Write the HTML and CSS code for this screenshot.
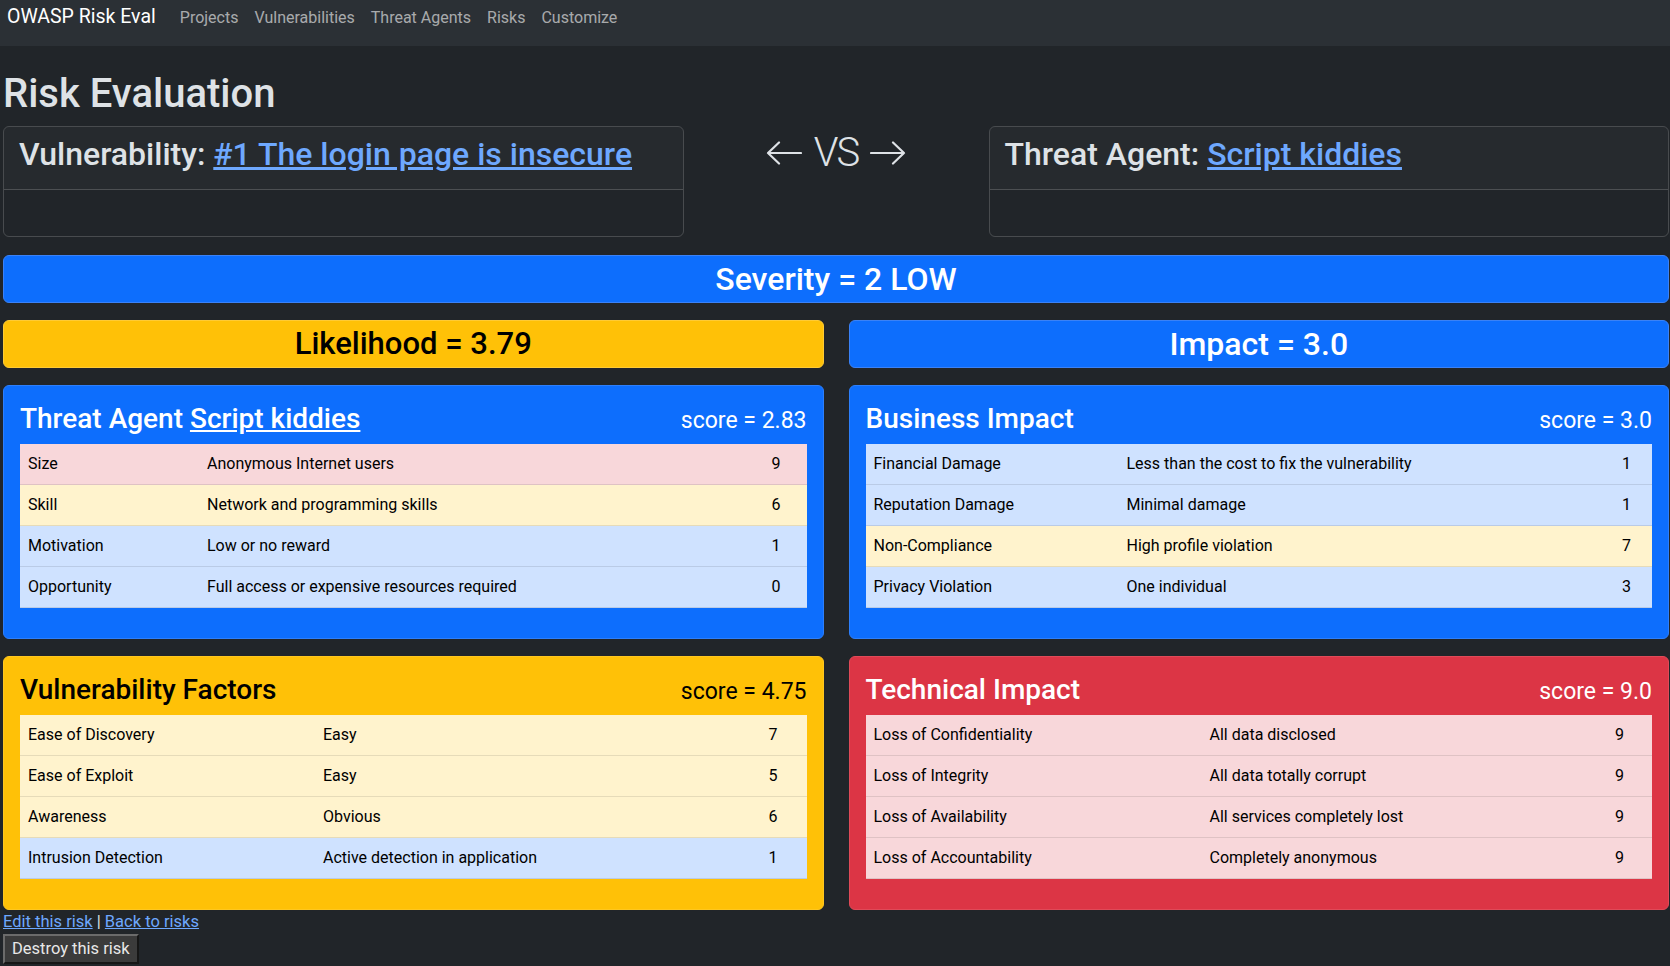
FILE: index.html
```html
<!DOCTYPE html>
<html lang="en">
<head>
<meta charset="utf-8">
<title>OWASP Risk Eval</title>
<link rel="stylesheet" href="styles.css">
</head>
<body>
<nav class="navbar">
  <a class="brand" href="#">OWASP Risk Eval</a>
  <ul class="nav-links">
    <li><a class="nav-link" href="#">Projects</a></li>
    <li><a class="nav-link" href="#">Vulnerabilities</a></li>
    <li><a class="nav-link" href="#">Threat Agents</a></li>
    <li><a class="nav-link" href="#">Risks</a></li>
    <li><a class="nav-link" href="#">Customize</a></li>
  </ul>
</nav>

<main class="page">
  <h1 class="page-title">Risk Evaluation</h1>

  <div class="versus">
    <div class="entity-card">
      <div class="entity-header">
        <h2 class="entity-title">Vulnerability: <a href="#">#1 The login page is insecure</a></h2>
      </div>
      <div class="entity-body"></div>
    </div>

    <div class="vs">
      <svg class="arrow" width="36" height="24" viewBox="0 0 36 24" aria-hidden="true">
        <path d="M35 12H2M13 1.5L2 12l11 10.5" fill="none" stroke="currentColor" stroke-width="2.2" stroke-linecap="round" stroke-linejoin="round"/>
      </svg>
      <span class="vs-text">VS</span>
      <svg class="arrow" width="36" height="24" viewBox="0 0 36 24" aria-hidden="true">
        <path d="M1 12h33M23 1.5L34 12 23 22.5" fill="none" stroke="currentColor" stroke-width="2.2" stroke-linecap="round" stroke-linejoin="round"/>
      </svg>
    </div>

    <div class="entity-card">
      <div class="entity-header">
        <h2 class="entity-title">Threat Agent: <a href="#">Script kiddies</a></h2>
      </div>
      <div class="entity-body"></div>
    </div>
  </div>

  <div class="banner banner-primary severity">Severity = 2 LOW</div>

  <div class="dashboard">
    <div class="banner banner-warning">Likelihood = 3.79</div>
    <div class="banner banner-primary">Impact = 3.0</div>

    <section class="factor-card card-primary">
      <div class="factor-head">
        <h3 class="factor-title">Threat Agent <a href="#">Script kiddies</a></h3>
        <span class="factor-score">score = 2.83</span>
      </div>
      <table class="factor-table">
        <colgroup><col class="ta-c1"><col class="ta-c2"><col class="ta-c3"></colgroup>
        <tr class="row-danger"><td>Size</td><td>Anonymous Internet users</td><td>9</td></tr>
        <tr class="row-warning"><td>Skill</td><td>Network and programming skills</td><td>6</td></tr>
        <tr class="row-primary"><td>Motivation</td><td>Low or no reward</td><td>1</td></tr>
        <tr class="row-primary"><td>Opportunity</td><td>Full access or expensive resources required</td><td>0</td></tr>
      </table>
    </section>

    <section class="factor-card card-primary">
      <div class="factor-head">
        <h3 class="factor-title">Business Impact</h3>
        <span class="factor-score">score = 3.0</span>
      </div>
      <table class="factor-table">
        <colgroup><col class="bi-c1"><col class="bi-c2"><col class="bi-c3"></colgroup>
        <tr class="row-primary"><td>Financial Damage</td><td>Less than the cost to fix the vulnerability</td><td>1</td></tr>
        <tr class="row-primary"><td>Reputation Damage</td><td>Minimal damage</td><td>1</td></tr>
        <tr class="row-warning"><td>Non-Compliance</td><td>High profile violation</td><td>7</td></tr>
        <tr class="row-primary"><td>Privacy Violation</td><td>One individual</td><td>3</td></tr>
      </table>
    </section>

    <section class="factor-card card-warning">
      <div class="factor-head">
        <h3 class="factor-title">Vulnerability Factors</h3>
        <span class="factor-score">score = 4.75</span>
      </div>
      <table class="factor-table">
        <colgroup><col class="vf-c1"><col class="vf-c2"><col class="vf-c3"></colgroup>
        <tr class="row-warning"><td>Ease of Discovery</td><td>Easy</td><td>7</td></tr>
        <tr class="row-warning"><td>Ease of Exploit</td><td>Easy</td><td>5</td></tr>
        <tr class="row-warning"><td>Awareness</td><td>Obvious</td><td>6</td></tr>
        <tr class="row-primary"><td>Intrusion Detection</td><td>Active detection in application</td><td>1</td></tr>
      </table>
    </section>

    <section class="factor-card card-danger">
      <div class="factor-head">
        <h3 class="factor-title">Technical Impact</h3>
        <span class="factor-score">score = 9.0</span>
      </div>
      <table class="factor-table">
        <colgroup><col class="ti-c1"><col class="ti-c2"><col class="ti-c3"></colgroup>
        <tr class="row-danger"><td>Loss of Confidentiality</td><td>All data disclosed</td><td>9</td></tr>
        <tr class="row-danger"><td>Loss of Integrity</td><td>All data totally corrupt</td><td>9</td></tr>
        <tr class="row-danger"><td>Loss of Availability</td><td>All services completely lost</td><td>9</td></tr>
        <tr class="row-danger"><td>Loss of Accountability</td><td>Completely anonymous</td><td>9</td></tr>
      </table>
    </section>
  </div>

  <p class="page-links"><a href="#">Edit this risk</a> | <a href="#">Back to risks</a></p>
  <button class="destroy-btn" type="button">Destroy this risk</button>
</main>
</body>
</html>
```
FILE: styles.css
```css
html, body {
  margin: 0;
  padding: 0;
}

body {
  background: #212529;
  color: #dee2e6;
  font-family: Roboto, "Noto Sans", "Liberation Sans", sans-serif;
  font-size: 16px;
  line-height: 1.5;
}

a {
  color: #6ea8fe;
}

/* ---------- navbar ---------- */
.navbar {
  display: flex;
  align-items: baseline;
  height: 46px;
  box-sizing: border-box;
  padding: 2px 8px 0 7px;
  background: #2b3035;
}

.brand {
  font-size: 19.5px;
  line-height: 30px;
  color: #fff;
  text-decoration: none;
  margin-right: 16px;
}

.nav-links {
  display: flex;
  list-style: none;
  margin: 0;
  padding: 0;
}

.nav-link {
  display: block;
  padding: 0 8px;
  font-size: 16px;
  line-height: 30px;
  color: rgba(255, 255, 255, 0.6);
  text-decoration: none;
}

/* ---------- page ---------- */
.page {
  padding: 0 1px 0 3px;
}

.page-title {
  font-size: 40px;
  font-weight: 500;
  line-height: 48px;
  margin: 24px 0 8px;
}

.versus {
  display: grid;
  grid-template-columns: 1fr 305px 1fr;
  margin-bottom: 18px;
}

.entity-card {
  border: 1px solid rgba(255, 255, 255, 0.175);
  border-radius: 6px;
  overflow: hidden;
}

.entity-header {
  padding: 8px 15px;
  background: rgba(222, 226, 230, 0.03);
  border-bottom: 1px solid rgba(255, 255, 255, 0.175);
}

.entity-title {
  margin: 0 0 8px;
  font-size: 32px;
  font-weight: 500;
  line-height: 38px;
}

.entity-body {
  height: 46px;
}

.vs {
  display: flex;
  justify-content: center;
  align-items: center;
  gap: 12px;
  padding-top: 3px;
  height: 48px;
  color: #dee2e6;
}

.vs-text {
  font-size: 40px;
  font-weight: 300;
  line-height: 48px;
  letter-spacing: -2px;
}

.arrow {
  display: block;
}

/* ---------- banners ---------- */
.banner {
  box-sizing: border-box;
  height: 48px;
  border-radius: 6px;
  text-align: center;
  font-size: 32px;
  font-weight: 500;
  line-height: 46px;
}

.banner-primary {
  background: #0d6efd;
  border: 1px solid #3b82f6;
  color: #fff;
}

.banner-warning {
  background: #ffc107;
  border: 1px solid #ffcb35;
  color: #000;
  font-size: 31px;
}

.severity {
  margin-bottom: 17px;
}

/* ---------- factor cards ---------- */
.dashboard {
  display: grid;
  grid-template-columns: 1fr 1fr;
  column-gap: 25px;
  row-gap: 17px;
}

.factor-card {
  padding: 16px;
  border-radius: 6px;
  border: 1px solid transparent;
}

.card-primary {
  background: #0d6efd;
  border-color: #2d7ffb;
  color: #fff;
}

.card-warning {
  background: #ffc107;
  border-color: #ffc720;
  color: #000;
}

.card-danger {
  background: #dc3545;
  border-color: #e04a58;
  color: #fff;
}

.factor-head {
  display: flex;
  justify-content: space-between;
  align-items: baseline;
  margin-bottom: 8px;
}

.factor-title {
  margin: 0;
  font-size: 28px;
  font-weight: 500;
  line-height: 34px;
}

.factor-title a {
  color: inherit;
}

.factor-score {
  font-size: 23px;
  line-height: 28px;
}

.factor-table {
  width: 100%;
  border-collapse: collapse;
  table-layout: fixed;
  margin-bottom: 14px;
  color: #000;
}

.factor-table td {
  padding: 8px;
  line-height: 24px;
  border-bottom: 1px solid;
}

.row-danger td {
  background: #f8d7da;
  border-bottom-color: #dfc2c4;
}

.row-warning td {
  background: #fff3cd;
  border-bottom-color: #e6dbb9;
}

.row-primary td {
  background: #cfe2ff;
  border-bottom-color: #bacbe6;
}

/* column widths per table */
.ta-c1 { width: 179px; }
.ta-c3 { width: 43px; }
.bi-c1 { width: 253px; }
.bi-c3 { width: 38px; }
.vf-c1 { width: 295px; }
.vf-c3 { width: 46px; }
.ti-c1 { width: 336px; }
.ti-c3 { width: 45px; }

/* ---------- footer actions ---------- */
.page-links {
  margin: 0;
  font-size: 16.5px;
  line-height: 24px;
}

.destroy-btn {
  display: block;
  margin: 0;
  padding: 1px 7px;
  font-family: Roboto, "Noto Sans", sans-serif;
  font-size: 16.5px;
  line-height: 24px;
  color: #e8e8e8;
  background: #3b3b3b;
  border: 2px outset #6b6b6b;
}
```
